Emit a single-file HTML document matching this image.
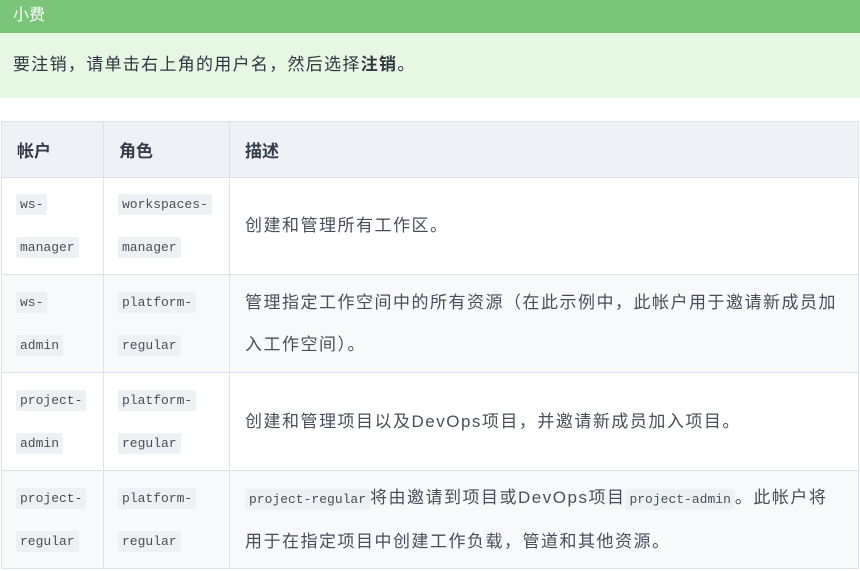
<!DOCTYPE html>
<html><head><meta charset="utf-8"><style>
*{margin:0;padding:0;box-sizing:border-box}
body{width:860px;height:571px;background:#fff;font-family:"Liberation Sans","Noto Sans CJK SC",sans-serif;color:#484f5a;overflow:hidden;position:relative}
.tip-h{position:absolute;left:0;top:0;width:860px;height:33px;background:#7bc57a;color:#fff;font-size:16px;line-height:31px;padding-left:13px}
.tip-b{position:absolute;left:0;top:33px;width:860px;height:65px;background:#e6f7e4;color:#303540;font-size:17px;line-height:64px;padding-left:13px;letter-spacing:1.3px}
table{position:absolute;left:1px;top:121px;width:858px;border-collapse:collapse;table-layout:fixed}
td,th{border:1px solid #dde2e8;vertical-align:middle;text-align:left}
th{background:#eef1f5;height:56px;font-size:17px;color:#363d4a;font-weight:bold;padding-left:15px}
td{height:98px;padding-left:15px;font-size:17px;letter-spacing:1.5px;line-height:42px}
tr.r1 td{height:97px}
td.c{padding-left:14px;line-height:42px;font-size:13px;letter-spacing:0}
tr.alt td{background:#f8f9fb}
code{font-family:"Liberation Mono",monospace;font-size:13px;background:#eef1f4;padding:3px 4px;border-radius:2px;color:#4a4f57;letter-spacing:0}
</style></head><body>
<div class="tip-h">小费</div>
<div class="tip-b">要注销，请单击右上角的用户名，然后选择<b>注销</b>。</div>
<table>
<colgroup><col style="width:102px"><col style="width:126px"><col></colgroup>
<tr><th>帐户</th><th>角色</th><th>描述</th></tr>
<tr class="r1"><td class="c"><code>ws-</code><br><code>manager</code></td><td class="c"><code>workspaces-</code><br><code>manager</code></td><td>创建和管理所有工作区。</td></tr>
<tr class="alt"><td class="c"><code>ws-</code><br><code>admin</code></td><td class="c"><code>platform-</code><br><code>regular</code></td><td>管理指定工作空间中的所有资源（在此示例中，此帐户用于邀请新成员加<br>入工作空间）。</td></tr>
<tr><td class="c"><code>project-</code><br><code>admin</code></td><td class="c"><code>platform-</code><br><code>regular</code></td><td>创建和管理项目以及DevOps项目，并邀请新成员加入项目。</td></tr>
<tr class="alt"><td class="c"><code>project-</code><br><code>regular</code></td><td class="c"><code>platform-</code><br><code>regular</code></td><td><code>project-regular</code>将由邀请到项目或DevOps项目<code>project-admin</code>。此帐户将<br>用于在指定项目中创建工作负载，管道和其他资源。</td></tr>
</table>
</body></html>
